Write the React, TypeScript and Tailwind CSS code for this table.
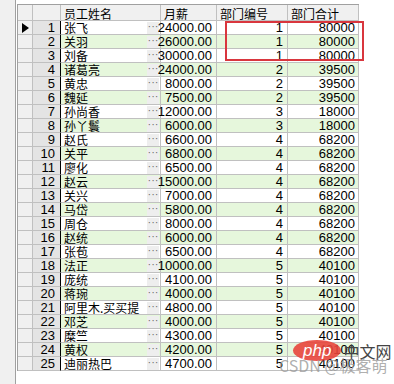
import React from "react";

const rows: [string, string, string, string][] = [
  ["张飞", "24000.00", "1", "80000"],
  ["关羽", "26000.00", "1", "80000"],
  ["刘备", "30000.00", "1", "80000"],
  ["诸葛亮", "24000.00", "2", "39500"],
  ["黄忠", "8000.00", "2", "39500"],
  ["魏延", "7500.00", "2", "39500"],
  ["孙尚香", "12000.00", "3", "18000"],
  ["孙丫鬟", "6000.00", "3", "18000"],
  ["赵氏", "6600.00", "4", "68200"],
  ["关平", "6800.00", "4", "68200"],
  ["廖化", "6500.00", "4", "68200"],
  ["赵云", "15000.00", "4", "68200"],
  ["关兴", "7000.00", "4", "68200"],
  ["马岱", "5800.00", "4", "68200"],
  ["周仓", "8000.00", "4", "68200"],
  ["赵统", "6000.00", "4", "68200"],
  ["张苞", "6500.00", "4", "68200"],
  ["法正", "10000.00", "5", "40100"],
  ["庞统", "4100.00", "5", "40100"],
  ["蒋琬", "4000.00", "5", "40100"],
  ["阿里木.买买提", "4800.00", "5", "40100"],
  ["邓芝", "4000.00", "5", "40100"],
  ["糜竺", "4300.00", "5", "40100"],
  ["黄权", "4200.00", "5", "40100"],
  ["迪丽热巴", "4700.00", "5", "40100"],
];

const cjk = "font-['SimSun','Noto_Sans_CJK_SC',sans-serif]";
const num = "font-['Liberation_Sans',sans-serif] text-[13px]";

export default function App() {
  return (
    <div className="relative flex h-[384px] w-[394px] overflow-hidden bg-white text-[12px] leading-none text-black">
      <div className="h-full w-[16px] border-r border-[#a0a0a0] bg-[#f0f0f0]" />

      <div className="pl-[1px] pt-[4px]">
        <div className="grid grid-cols-[15px_28px_100px_56px_71px_71px] border-l border-t border-[#a0a0a0]">
          {/* header */}
          <div className="h-[16px] border-b border-r border-[#c0c0c0] bg-[#f0f0f0]" />
          <div className="h-[16px] border-b border-r border-[#c0c0c0] bg-[#f0f0f0]" />
          <div className={`flex h-[16px] items-end border-b border-r border-[#c0c0c0] bg-[#f0f0f0] pl-[3px] ${cjk}`}>
            员工姓名
          </div>
          <div className={`flex h-[16px] items-end border-b border-r border-[#c0c0c0] bg-[#f0f0f0] pl-[3px] ${cjk}`}>
            月薪
          </div>
          <div className={`flex h-[16px] items-end border-b border-r border-[#c0c0c0] bg-[#f0f0f0] pl-[3px] ${cjk}`}>
            部门编号
          </div>
          <div className={`flex h-[16px] items-end border-b border-r border-[#c0c0c0] bg-[#f0f0f0] pl-[3px] ${cjk}`}>
            部门合计
          </div>

          {rows.map(([name, pay, dept, total], i) => {
            const bg = i % 2 === 1 ? "bg-[#e6f7dc]" : "bg-white";
            return (
              <React.Fragment key={i}>
                <div className="flex h-[14px] items-center justify-center border-b border-r border-[#c0c0c0] bg-[#f0f0f0]">
                  {i === 0 && (
                    <svg width="7" height="10" viewBox="0 0 7 10">
                      <path d="M0 0 L7 5 L0 10 Z" fill="#000" />
                    </svg>
                  )}
                </div>
                <div className={`flex h-[14px] items-center justify-end border-b border-r border-[#c0c0c0] border-r-black bg-[#e4e4e4] pr-[5px] ${num}`}>
                  {i + 1}
                </div>
                <div className={`flex h-[14px] items-center justify-between border-b border-r border-[#c0c0c0] ${bg}`}>
                  <span className={`whitespace-nowrap pl-[3px] pt-[1px] ${cjk}`}>{name}</span>
                  <span className="mr-[1px] flex h-[12px] w-[12px] items-center justify-center bg-[#eeeeee] pb-[2px] font-['Liberation_Sans',sans-serif] text-[11px] text-[#707070]">
                    ···
                  </span>
                </div>
                <div className={`flex h-[14px] items-center justify-end border-b border-r border-[#c0c0c0] pr-[4px] ${bg} ${num}`}>
                  {pay}
                </div>
                <div className={`flex h-[14px] items-center justify-end border-b border-r border-[#c0c0c0] pr-[4px] ${bg} ${num}`}>
                  {dept}
                </div>
                <div className={`flex h-[14px] items-center justify-end border-b border-r border-[#c0c0c0] pr-[3px] ${bg} ${num}`}>
                  {total}
                </div>
              </React.Fragment>
            );
          })}
        </div>
      </div>

      {/* highlight box */}
      <div className="absolute left-[225px] top-[21px] h-[40px] w-[139px] border-2 border-[#d9363e]" />

      {/* watermark */}
      <div className="absolute left-[293px] top-[340px] flex items-center gap-[2px]">
        <span className="rounded-[50%] bg-[#e8453c]/90 px-[10px] py-[2px] font-['Liberation_Sans',sans-serif] text-[17px] italic text-white">
          php
        </span>
        <span className={`text-[16px] text-[#444] ${cjk}`}>中文网</span>
      </div>
      <div className={`absolute left-[279px] top-[357px] text-[16px] text-[#9a9a9a]/80 ${cjk}`}>
        CSDN @极客萌
      </div>
    </div>
  );
}
